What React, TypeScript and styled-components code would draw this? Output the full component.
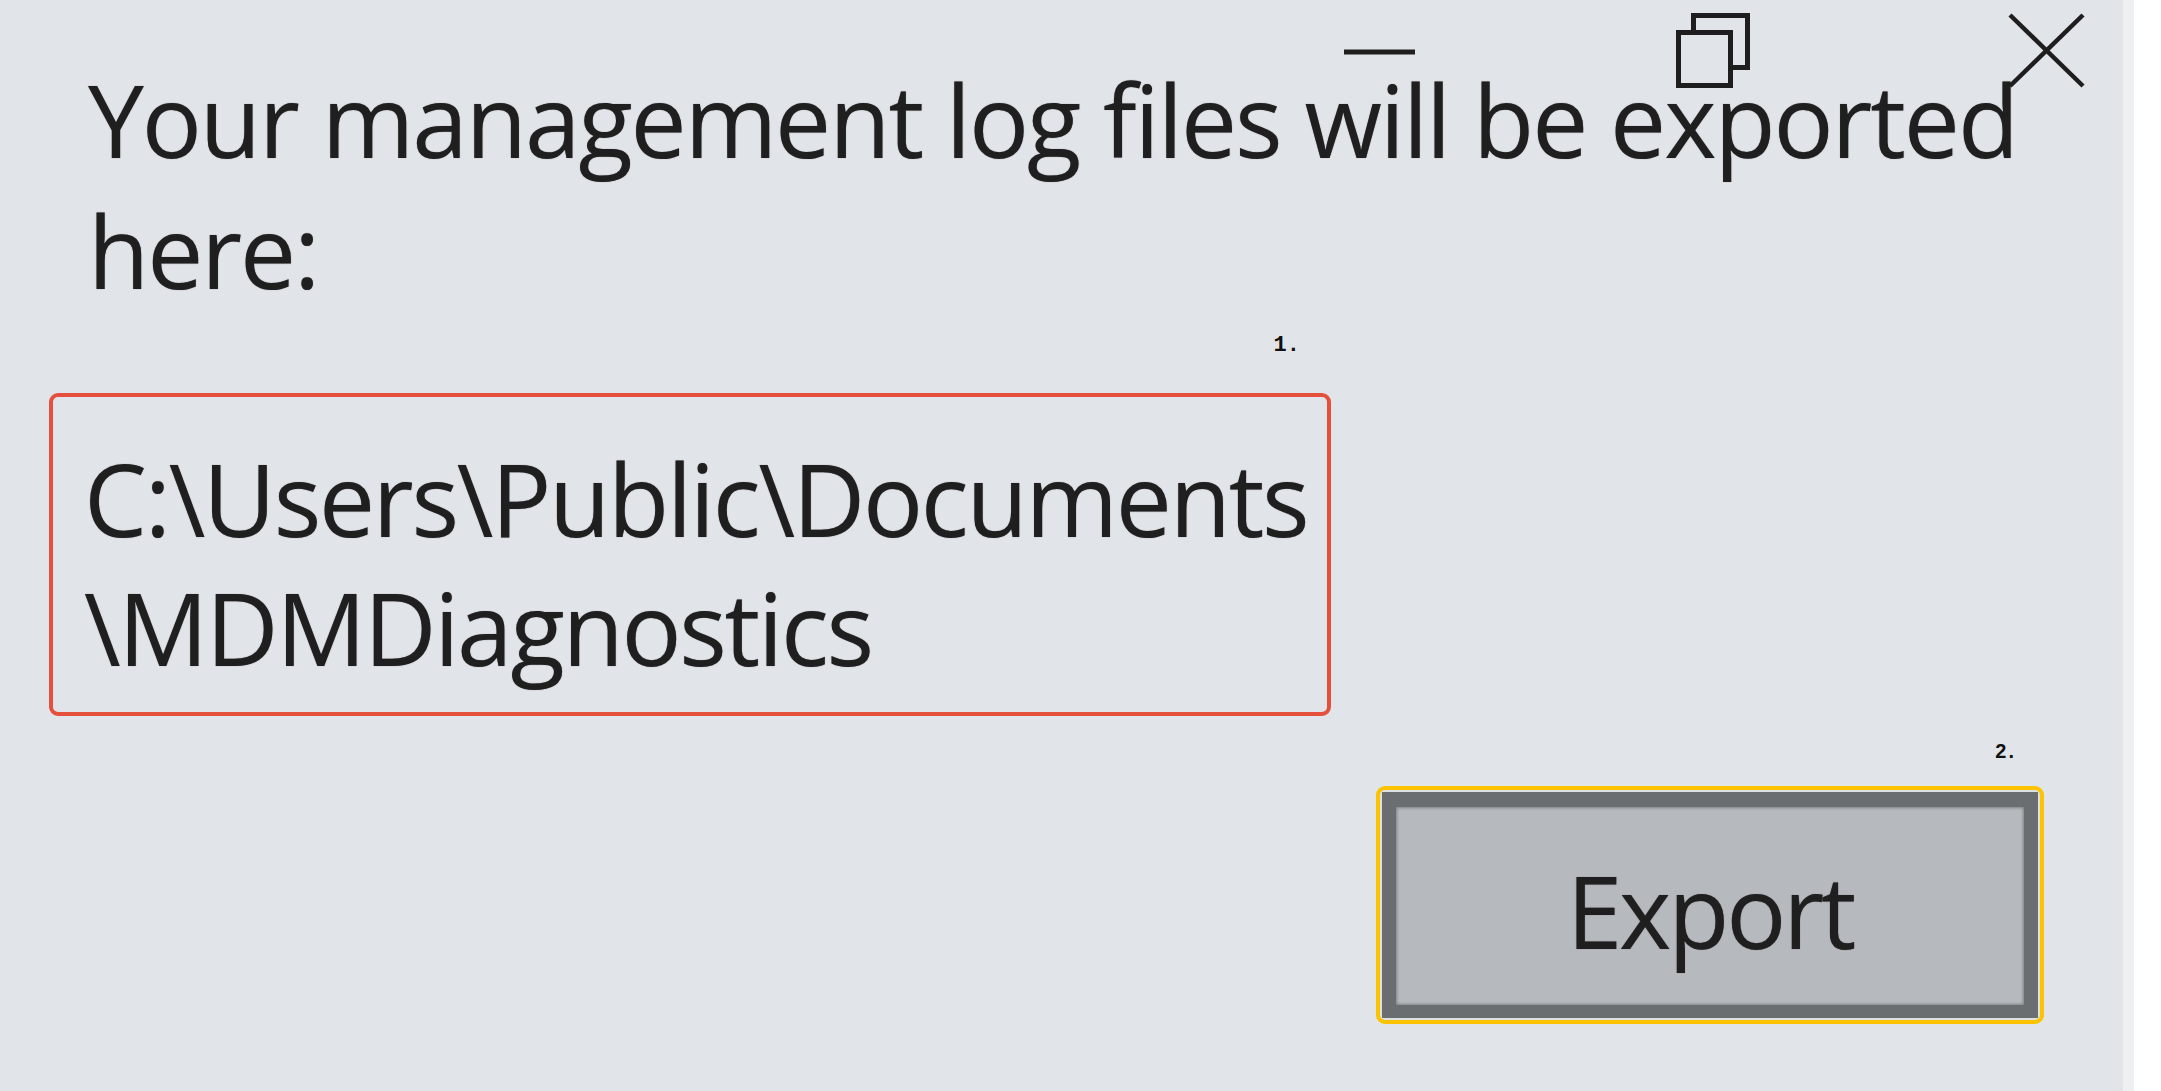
import React from "react";
import styled, { createGlobalStyle } from "styled-components";

const GlobalStyle = createGlobalStyle`
  html, body {
    margin: 0;
    padding: 0;
    background: #ffffff;
  }
  #root {
    min-height: 100vh;
  }
`;

const Page = styled.div`
  display: flex;
  min-height: 100vh;
`;

const Window = styled.div`
  position: relative;
  width: 2134px;
  min-height: 100vh;
  box-sizing: border-box;
  padding: 54px 79px 0 49px;
  background-color: #e1e5e9;
  border-right: 11px solid transparent;
  border-image: linear-gradient(to right, #d5d9dc, #b9bdc0, #cdd1d4, #eef0f1) 1;
  font-family: "Open Sans", "Noto Sans", sans-serif;
  color: #1f1f1f;
  text-shadow: 0 0 1px rgba(20, 20, 20, 0.55);
`;

const CaptionBar = styled.div`
  position: absolute;
  top: 10px;
  right: 37px;
  display: flex;
  gap: 253px;
`;

const CaptionIcon = styled.svg`
  display: block;
  width: 80px;
  height: 80px;
  stroke: #1e1e1e;
  fill: none;
`;

const Heading = styled.div`
  margin-left: 39px;
  font-size: 100px;
  line-height: 131px;
  letter-spacing: -2.1px;
  width: 1960px;
`;

const Annotated = styled.div`
  display: flex;
  flex-direction: column;
  align-items: flex-end;
  width: fit-content;
`;

const Marker = styled.div<{ $mono?: boolean }>`
  font-family: ${(p) =>
    p.$mono ? '"Liberation Mono", "DejaVu Sans Mono", monospace' : '"Liberation Sans", Arial, sans-serif'};
  font-weight: 700;
  font-size: ${(p) => (p.$mono ? "22px" : "20px")};
  line-height: ${(p) => (p.$mono ? "22px" : "20px")};
  letter-spacing: ${(p) => (p.$mono ? "0" : "2px")};
  color: #111;
  text-shadow: none;
  margin-right: ${(p) => (p.$mono ? "31px" : "28px")};
`;

const PathBox = styled.div`
  width: 1282px;
  box-sizing: border-box;
  margin-top: 36px;
  padding: 37px 20px 20px 31px;
  border: 4px solid #e5503c;
  border-radius: 9px;
  font-size: 100px;
  line-height: 129px;
  letter-spacing: -2.3px;
  white-space: nowrap;
`;

const Footer = styled.div`
  display: flex;
  justify-content: flex-end;
  margin-top: 25px;
`;

const FocusRing = styled.div`
  margin-top: 25px;
  padding: 2px;
  border: 4px solid #fcc300;
  border-radius: 9px;
  background: #dde1e4;
`;

const ExportButton = styled.button`
  display: flex;
  align-items: center;
  justify-content: center;
  width: 656px;
  height: 226px;
  box-sizing: border-box;
  padding: 8px 0 0;
  border: solid #6b6e71;
  border-width: 15px 14px 13px 14px;
  background: #b6babe;
  box-shadow: inset 0 0 3px 1px rgba(90, 93, 96, 0.6);
  font-family: "Open Sans", "Noto Sans", sans-serif;
  font-size: 100px;
  line-height: 100px;
  letter-spacing: -3.2px;
  color: #1f1f1f;
  text-shadow: 0 0 1px rgba(20, 20, 20, 0.55);
  cursor: pointer;
`;

function MinimizeIcon() {
  return (
    <CaptionIcon viewBox="0 0 80 80" strokeWidth={5}>
      <line x1="4" y1="42" x2="75" y2="42" />
    </CaptionIcon>
  );
}

function RestoreIcon() {
  return (
    <CaptionIcon viewBox="0 0 80 80" strokeWidth={5}>
      <rect x="5.5" y="22.5" width="52" height="53" />
      <path d="M20.5 20 V5.5 H74.5 V57.5 H60" />
    </CaptionIcon>
  );
}

function CloseIcon() {
  return (
    <CaptionIcon viewBox="0 0 80 80" strokeWidth={4.5}>
      <line x1="4" y1="5" x2="77" y2="76" />
      <line x1="77" y1="5" x2="4" y2="76" />
    </CaptionIcon>
  );
}

export default function App() {
  return (
    <>
      <GlobalStyle />
      <Page>
        <Window>
          <CaptionBar>
            <MinimizeIcon />
            <RestoreIcon />
            <CloseIcon />
          </CaptionBar>
          <Heading>Your management log files will be exported here:</Heading>
          <Annotated>
            <Marker $mono style={{ marginTop: 19 }}>
              1.
            </Marker>
            <PathBox>
              {"C:\\Users\\Public\\Documents"}
              <br />
              {"\\MDMDiagnostics"}
            </PathBox>
          </Annotated>
          <Footer>
            <Annotated>
              <Marker>2.</Marker>
              <FocusRing>
                <ExportButton>Export</ExportButton>
              </FocusRing>
            </Annotated>
          </Footer>
        </Window>
      </Page>
    </>
  );
}
